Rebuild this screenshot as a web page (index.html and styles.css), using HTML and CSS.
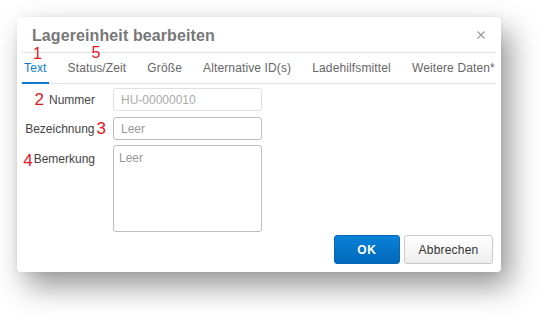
FILE: index.html
```html
<!DOCTYPE html>
<html lang="de">
<head>
<meta charset="utf-8">
<title>Lagereinheit bearbeiten</title>
<link rel="stylesheet" href="styles.css">
</head>
<body>
<div class="dialog">
  <div class="header">
    <h1 class="title">Lagereinheit bearbeiten</h1>
    <span class="close"><svg width="8" height="8" viewBox="0 0 8 8"><path d="M0.5 0.5L7.5 7.5M7.5 0.5L0.5 7.5" stroke="#9a9a9a" stroke-width="1.2"/></svg></span>
  </div>
  <div class="tabs">
    <div class="tab active">Text<span class="mark mark1">1</span></div>
    <div class="tab">Status/Zeit<span class="mark mark5">5</span></div>
    <div class="tab">Größe</div>
    <div class="tab">Alternative ID(s)</div>
    <div class="tab">Ladehilfsmittel</div>
    <div class="tab">Weitere Daten*</div>
  </div>
  <div class="form">
    <label class="label"><span class="num num2">2</span>Nummer</label>
    <div class="field disabled">HU-00000010</div>
    <label class="label">Bezeichnung<span class="num num3">3</span></label>
    <div class="field">Leer</div>
    <label class="label top"><span class="num num4">4</span>Bemerkung</label>
    <div class="field area">Leer</div>
  </div>
  <div class="footer">
    <button class="btn primary">OK</button>
    <button class="btn">Abbrechen</button>
  </div>
</div>
</body>
</html>
```
FILE: styles.css
```css
html, body {
  margin: 0;
  padding: 0;
  background: #fff;
}
body {
  min-height: 320px;
  box-sizing: border-box;
  padding: 17px 0 0 17px;
  font-family: "Liberation Sans", Arial, sans-serif;
  font-size: 12px;
}
.dialog {
  width: 484px;
  height: 255px;
  background: #fff;
  border-radius: 4px;
  box-shadow: 9px 14px 30px rgba(0, 0, 0, 0.42), 0 0 5px rgba(0, 0, 0, 0.06);
  display: flex;
  flex-direction: column;
  box-sizing: border-box;
}
.header {
  height: 35px;
  margin: 0 5px;
  border-bottom: 1px solid #e3e3e3;
  display: flex;
  align-items: center;
  justify-content: space-between;
  box-sizing: content-box;
}
.title {
  margin: 2px 0 0 10px;
  font-size: 16px;
  font-weight: bold;
  color: #777;
  letter-spacing: 0.1px;
}
.close {
  display: flex;
  margin: 1px 11px 0 0;
}
.tabs {
  height: 30px;
  margin: 0 5px;
  border-bottom: 1px solid #e3e3e3;
  display: flex;
  gap: 17px;
}
.tab {
  position: relative;
  flex-shrink: 0;
  white-space: nowrap;
  padding: 0 2px;
  display: flex;
  align-items: center;
  color: #666;
  font-size: 12px;
  letter-spacing: 0.13px;
  box-sizing: border-box;
  border-bottom: 2px solid transparent;
  margin-bottom: -1px;
  padding-top: 1px;
}
.tab.active {
  color: #0a7bd1;
  border-bottom-color: #0a7bd1;
}
.mark {
  position: absolute;
  color: #e8141c;
  font-size: 16px;
  line-height: 1;
  letter-spacing: 0;
}
.mark1 { left: 11px; top: -7px; }
.mark5 { left: 26px; top: -8px; }
.form {
  display: grid;
  grid-template-columns: 78px 149px;
  column-gap: 18px;
  row-gap: 6px;
  padding: 4px 0 0 0;
}
.label {
  display: flex;
  align-items: center;
  justify-content: flex-end;
  color: #444;
  font-size: 12px;
  white-space: nowrap;
}
.label.top {
  align-items: flex-start;
  padding-top: 6px;
}
.num {
  color: #e8141c;
  font-size: 17px;
  line-height: 1;
}
.num2 { margin-right: 5px; }
.num3 { margin-left: 2px; margin-right: -11px; }
.num4 { margin-left: -10px; margin-right: 1px; }
.field {
  height: 23px;
  box-sizing: border-box;
  border: 1px solid #bdbdbd;
  border-radius: 3px;
  padding: 0 7px;
  display: flex;
  align-items: center;
  color: #999;
  font-size: 12px;
}
.field.disabled {
  border-color: #e0e0e0;
  color: #aaa;
}
.field.area {
  height: 87px;
  margin-top: -1px;
  align-items: flex-start;
  padding: 5px 5px;
}
.footer {
  margin-top: auto;
  display: flex;
  justify-content: flex-end;
  gap: 4px;
  padding: 0 8px 8px 0;
}
.btn {
  height: 29px;
  border-radius: 3px;
  font-family: "Liberation Sans", Arial, sans-serif;
  font-size: 12px;
  border: 1px solid #c9c9c9;
  background: linear-gradient(#fff, #eee);
  color: #333;
  width: 89px;
  padding: 0;
  letter-spacing: 0.2px;
}
.btn.primary {
  width: 66px;
  border-color: #0567b5;
  background: linear-gradient(#0a82d8, #0068bb);
  color: #fff;
  font-weight: bold;
  font-size: 12px;
  letter-spacing: 0.8px;
}
```
